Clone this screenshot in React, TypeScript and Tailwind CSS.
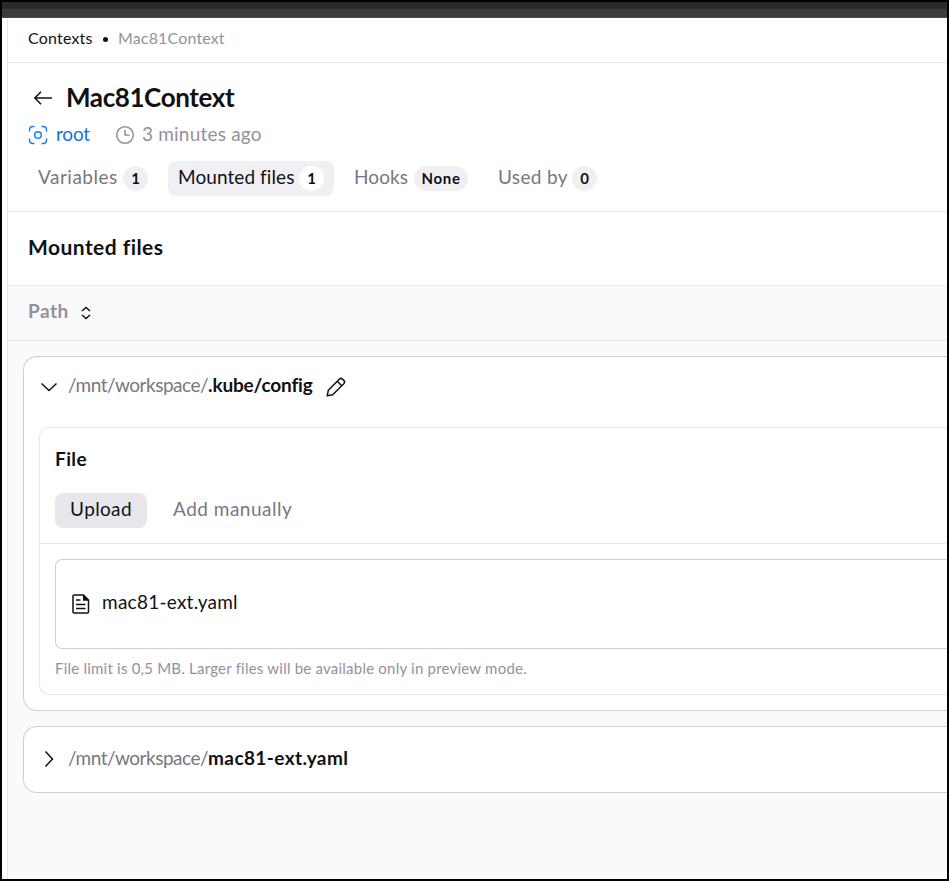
import type { ReactNode } from "react";

interface TabProps {
  label: string;
  count: string;
  active?: boolean;
  className: string;
  labelClassName?: string;
}

function Tab({ label, count, active, className, labelClassName = "" }: TabProps) {
  return (
    <button
      className={`flex h-[35px] items-center justify-between rounded-lg pl-[10px] ${className} ${
        active ? "bg-[#f0f0f4] text-[#111114]" : "text-[#777781]"
      }`}
    >
      <span className={`-mt-[3px] whitespace-nowrap text-[19px] leading-6 ${labelClassName}`}>{label}</span>
      <span
        className={`flex h-[25px] min-w-[25px] items-center justify-center rounded-full px-[6px] text-[15px] font-bold leading-none text-[#111114] ${
          count.length > 1 ? "w-[54px] tracking-[0.7px]" : ""
        } ${active ? "bg-white" : "bg-[#f0f0f4]"}`}
      >
        {count}
      </span>
    </button>
  );
}

function FilePath({ name, className }: { name: string; className: string }) {
  return (
    <span className="ml-[9px] whitespace-nowrap text-[19px] leading-6 tracking-[-0.5px] text-[#777781]">
      /mnt/workspace/<span className={`font-bold text-[#111114] ${className}`}>{name}</span>
    </span>
  );
}

function Icon({ size, className = "", children }: { size: number; className?: string; children: ReactNode }) {
  return (
    <svg
      width={size}
      height={size}
      viewBox={`0 0 ${size} ${size}`}
      fill="none"
      stroke="currentColor"
      strokeWidth="1.5"
      className={`shrink-0 ${className}`}
    >
      {children}
    </svg>
  );
}

export default function App() {
  return (
    <div className="flex h-[881px] w-[949px] flex-col overflow-hidden border-2 border-black bg-white font-['Lato','Noto_Sans',sans-serif] text-[#111114]">
      <div className="h-[7px] shrink-0 bg-[#2a2a2a]" />
      <div className="h-[9px] shrink-0 border-b border-[#4a4a4a] bg-[#3b3b3b]" />

      <main className="ml-[5px] flex flex-1 flex-col border-l border-[#e6e6ea]">
        <nav className="flex h-[45px] items-center border-b border-[#e8e8ea] pb-1 pl-[20px] text-[16px] leading-6">
          <span className="w-[65px] tracking-[0.2px]">Contexts</span>
          <span className="ml-[10px] mt-[3px] size-[5px] rounded-full bg-[#111114]" />
          <span className="ml-[10px] tracking-[0.15px] text-[#92929c]">Mac81Context</span>
        </nav>

        <header className="h-[149px] border-b border-[#e8e8ea] pl-[20px] pt-[16px]">
          <div className="flex h-9 items-center">
            <Icon size={20} className="ml-[5px] mt-px">
              <path d="M1.5 10H19M8 3.8L1.8 10L8 16.2" />
            </Icon>
            <h1 className="ml-[13px] text-[26px] font-bold leading-9 tracking-[-0.4px]">Mac81Context</h1>
          </div>
          <div className="flex h-[38px] items-center text-[19px] leading-6">
            <Icon size={20} className="mt-px text-[#1b7bff]">
              <path d="M1.5 6.5V5Q1.5 1.5 5 1.5H6.5M13.5 1.5H15Q18.5 1.5 18.5 5V6.5M18.5 13.5V15Q18.5 18.5 15 18.5H13.5M6.5 18.5H5Q1.5 18.5 1.5 15V13.5" />
              <circle cx="10" cy="10" r="3.3" />
            </Icon>
            <span className="ml-2 w-[34px] tracking-[-0.2px] text-[#1b6fe8]">root</span>
            <Icon size={20} className="ml-[25px] mt-px text-[#92929c]">
              <circle cx="10" cy="10" r="8.3" />
              <path d="M10 5V10H14.5" />
            </Icon>
            <span className="ml-[7px] tracking-[0.2px] text-[#92929c]">3 minutes ago</span>
          </div>
          <div className="mt-[8px] flex">
            <Tab label="Variables" count="1" className="w-[120px]" labelClassName="tracking-[0.5px]" />
            <Tab
              label="Mounted files"
              count="1"
              active
              className="ml-5 w-[166px] pr-[10px]"
              labelClassName="tracking-[0.08px]"
            />
            <Tab label="Hooks" count="None" className="ml-[10px] w-[124px]" labelClassName="tracking-[0.1px]" />
            <Tab label="Used by" count="0" className="ml-[20px] w-[109px]" labelClassName="tracking-[0.35px]" />
          </div>
        </header>

        <section className="flex h-[74px] shrink-0 items-center border-b border-[#e8e8ea] pb-[3px] pl-[20px]">
          <h2 className="text-[21px] font-bold leading-7 tracking-[0.45px]">Mounted files</h2>
        </section>

        <div className="flex flex-1 flex-col bg-[#f9fafc]">
          <div className="flex h-[55px] shrink-0 items-center border-b border-[#e6e6ea] pb-[4px] pl-[20px]">
            <span className="w-[40px] text-[19px] font-bold leading-6 tracking-[0.5px] text-[#92929c]">Path</span>
            <Icon size={14} className="ml-[11px] mt-[4px]">
              <path d="M3 5L7 1.5L11 5M3 9L7 12.5L11 9" />
            </Icon>
          </div>

          <div className="flex flex-col gap-[15px] pl-[15px] pt-[15px]">
            <article className="h-[355px] rounded-l-[14px] border border-r-0 border-[#cfcfd8] bg-white pl-[15px]">
              <div className="flex h-[70px] items-center pb-[14px]">
                <Icon size={20} className="mt-[4px]">
                  <path d="M2.5 6.5L10 13.5L17.5 6.5" />
                </Icon>
                <FilePath name=".kube/config" className="tracking-[-0.15px]" />
                <Icon size={20} className="ml-[13px] mt-[4px]">
                  <path
                    d="M1.2 18.8L2.3 13.3L13.3 2.2Q15 0.6 16.6 2.2L17.8 3.4Q19.4 5 17.8 6.7L6.7 17.7ZM11.3 4.3L15.7 8.7"
                    strokeLinejoin="round"
                  />
                </Icon>
              </div>

              <div className="h-[268px] rounded-l-[10px] border border-r-0 border-[#e8e8ea]">
                <div className="h-[116px] border-b border-[#e8e8ea] pl-[15px] pt-[19px]">
                  <h3 className="text-[19px] font-bold leading-6 tracking-[0.4px]">File</h3>
                  <div className="mt-[22px] flex text-[19px]">
                    <button className="h-[35px] w-[92px] rounded-lg bg-[#e8e8ec] pb-0.5 tracking-[0.35px]">
                      Upload
                    </button>
                    <button className="ml-[26px] h-[35px] pb-0.5 tracking-[0.5px] text-[#777781]">Add manually</button>
                  </div>
                </div>
                <div className="pl-[15px] pt-[15px]">
                  <div className="flex h-[90px] items-center rounded-l-[7px] border border-r-0 border-[#cfcfd8] pl-[15px]">
                    <Icon size={20}>
                      <path d="M3 1H12.5L17.5 6V18Q17.5 19 16.5 19H3Q2 19 2 18V2Q2 1 3 1Z" />
                      <path d="M12 0.5V6.8H18.2Z" fill="currentColor" stroke="none" />
                      <path d="M5 6H9.5M5 10.5H14.5M5 14.5H14.5" />
                    </Icon>
                    <span className="-mt-1 ml-[11px] text-[19px] leading-6 tracking-[0.25px]">mac81-ext.yaml</span>
                  </div>
                  <p className="mt-[9px] text-[15px] leading-5 tracking-[0.22px] text-[#92929c]">
                    File limit is 0,5 MB. Larger files will be available only in preview mode.
                  </p>
                </div>
              </div>
            </article>

            <article className="flex h-[67px] items-center rounded-l-[14px] border border-r-0 border-[#cfcfd8] bg-white pb-[3px] pl-[15px]">
              <Icon size={20} className="mt-px">
                <path d="M6.5 2.5L13.5 10L6.5 17.5" />
              </Icon>
              <FilePath name="mac81-ext.yaml" className="tracking-[0.4px]" />
            </article>
          </div>
        </div>
      </main>
    </div>
  );
}
